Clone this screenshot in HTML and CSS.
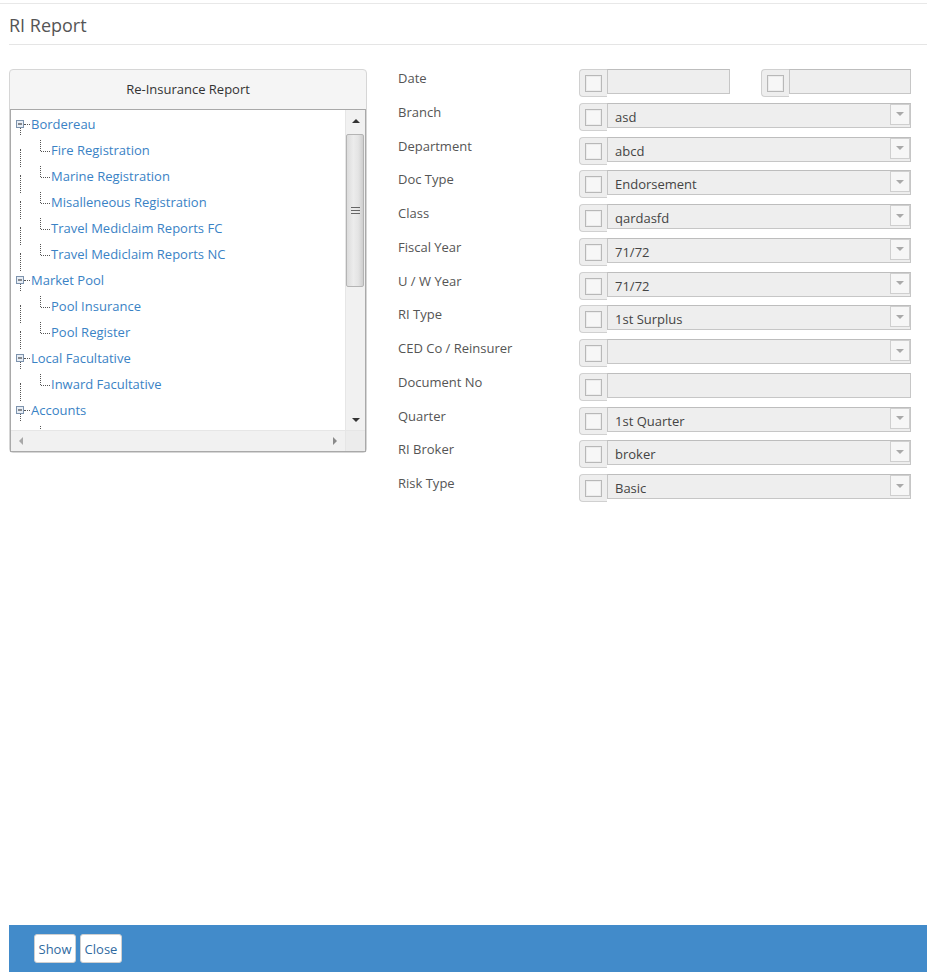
FILE: index.html
```html
<!DOCTYPE html>
<html>
<head>
<meta charset="utf-8">
<title>RI Report</title>
<link rel="stylesheet" href="styles.css">
</head>
<body>
<div class="app">
  <div class="topbar"></div>
  <div class="page-header">RI Report</div>
  <div class="main">
    <div class="panel">
      <div class="panel-title">Re-Insurance Report</div>
      <div class="tree-box">
        <div class="tree-content">
          <div class="row root"><svg class="tog" width="8" height="8" viewBox="0 0 8 8"><rect x="0.5" y="0.5" width="7" height="7" fill="#e8eef6" stroke="#7d93ad"/><line x1="2" y1="4" x2="6" y2="4" stroke="#222"/></svg><span class="conn"></span><a>Bordereau</a></div>
          <div class="row child"><i class="outer"></i><a>Fire Registration</a></div>
          <div class="row child"><i class="outer"></i><a>Marine Registration</a></div>
          <div class="row child"><i class="outer"></i><a>Misalleneous Registration</a></div>
          <div class="row child"><i class="outer"></i><a>Travel Mediclaim Reports FC</a></div>
          <div class="row child"><i class="outer"></i><a>Travel Mediclaim Reports NC</a></div>
          <div class="row root"><svg class="tog" width="8" height="8" viewBox="0 0 8 8"><rect x="0.5" y="0.5" width="7" height="7" fill="#e8eef6" stroke="#7d93ad"/><line x1="2" y1="4" x2="6" y2="4" stroke="#222"/></svg><span class="conn"></span><a>Market Pool</a></div>
          <div class="row child"><i class="outer"></i><a>Pool Insurance</a></div>
          <div class="row child"><i class="outer"></i><a>Pool Register</a></div>
          <div class="row root"><svg class="tog" width="8" height="8" viewBox="0 0 8 8"><rect x="0.5" y="0.5" width="7" height="7" fill="#e8eef6" stroke="#7d93ad"/><line x1="2" y1="4" x2="6" y2="4" stroke="#222"/></svg><span class="conn"></span><a>Local Facultative</a></div>
          <div class="row child"><i class="outer"></i><a>Inward Facultative</a></div>
          <div class="row root"><svg class="tog" width="8" height="8" viewBox="0 0 8 8"><rect x="0.5" y="0.5" width="7" height="7" fill="#e8eef6" stroke="#7d93ad"/><line x1="2" y1="4" x2="6" y2="4" stroke="#222"/></svg><span class="conn"></span><a>Accounts</a></div>
          <div class="row child"><i class="outer"></i><a></a></div>
        </div>
        <div class="vscroll">
          <div class="sbtn"><span class="tri up"></span></div>
          <div class="thumb"><span class="grip"></span></div>
          <div class="sfill"></div>
          <div class="sbtn"><span class="tri down"></span></div>
        </div>
        <div class="hscroll">
          <div class="hbtn"><span class="tri left"></span></div>
          <div class="sfill"></div>
          <div class="hbtn"><span class="tri right"></span></div>
        </div>
        <div class="corner"></div>
      </div>
    </div>

    <div class="form">
      <div class="frow">
        <label>Date</label>
        <div class="pair">
          <div class="group"><div class="addon"><span class="chk"></span></div><div class="field"></div></div>
          <div class="group"><div class="addon"><span class="chk"></span></div><div class="field"></div></div>
        </div>
      </div>
      <div class="frow">
        <label>Branch</label>
        <div class="group"><div class="addon"><span class="chk"></span></div><div class="field"><span class="val">asd</span><span class="dd"></span></div></div>
      </div>
      <div class="frow">
        <label>Department</label>
        <div class="group"><div class="addon"><span class="chk"></span></div><div class="field"><span class="val">abcd</span><span class="dd"></span></div></div>
      </div>
      <div class="frow">
        <label>Doc Type</label>
        <div class="group"><div class="addon"><span class="chk"></span></div><div class="field"><span class="val">Endorsement</span><span class="dd"></span></div></div>
      </div>
      <div class="frow">
        <label>Class</label>
        <div class="group"><div class="addon"><span class="chk"></span></div><div class="field"><span class="val">qardasfd</span><span class="dd"></span></div></div>
      </div>
      <div class="frow">
        <label>Fiscal Year</label>
        <div class="group"><div class="addon"><span class="chk"></span></div><div class="field"><span class="val">71/72</span><span class="dd"></span></div></div>
      </div>
      <div class="frow">
        <label>U / W Year</label>
        <div class="group"><div class="addon"><span class="chk"></span></div><div class="field"><span class="val">71/72</span><span class="dd"></span></div></div>
      </div>
      <div class="frow">
        <label>RI Type</label>
        <div class="group"><div class="addon"><span class="chk"></span></div><div class="field"><span class="val">1st Surplus</span><span class="dd"></span></div></div>
      </div>
      <div class="frow">
        <label>CED Co / Reinsurer</label>
        <div class="group"><div class="addon"><span class="chk"></span></div><div class="field"><span class="val"></span><span class="dd"></span></div></div>
      </div>
      <div class="frow">
        <label>Document No</label>
        <div class="group"><div class="addon"><span class="chk"></span></div><div class="field"></div></div>
      </div>
      <div class="frow">
        <label>Quarter</label>
        <div class="group"><div class="addon"><span class="chk"></span></div><div class="field"><span class="val">1st Quarter</span><span class="dd"></span></div></div>
      </div>
      <div class="frow">
        <label>RI Broker</label>
        <div class="group"><div class="addon"><span class="chk"></span></div><div class="field"><span class="val">broker</span><span class="dd"></span></div></div>
      </div>
      <div class="frow">
        <label>Risk Type</label>
        <div class="group"><div class="addon"><span class="chk"></span></div><div class="field"><span class="val">Basic</span><span class="dd"></span></div></div>
      </div>
    </div>
  </div>

  <div class="footer">
    <button class="btn">Show</button>
    <button class="btn">Close</button>
  </div>
</div>
</body>
</html>
```

FILE: styles.css
```css
* { box-sizing: border-box; }
html, body { margin: 0; height: 100%; }
body {
  font-family: "Open Sans", "DejaVu Sans", sans-serif;
  font-size: 13px;
  color: #555;
  background: #fff;
}
.app {
  min-height: 100vh;
  display: flex;
  flex-direction: column;
}
.topbar {
  height: 4px;
  border-bottom: 1px solid #e8e8e8;
}
.page-header {
  margin-left: 9px;
  height: 41px;
  padding-top: 1px;
  line-height: 40px;
  font-size: 18px;
  color: #555;
  border-bottom: 1px solid #e5e5e5;
}
.main {
  display: flex;
  align-items: flex-start;
  gap: 31px;
  padding: 24px 16px 0 9px;
}

/* left panel */
.panel {
  width: 358px;
  flex: none;
  border: 1px solid #d6d6d6;
  border-radius: 4px;
  background: #f5f5f5;
}
.panel-title {
  height: 39px;
  line-height: 39px;
  text-align: center;
  color: #333;
}
.tree-box {
  height: 343px;
  border: 1px solid #a9a9a9;
  background: #fff;
  display: grid;
  grid-template-columns: 1fr 20px;
  grid-template-rows: 1fr 21px;
}
.tree-content {
  overflow: hidden;
  padding-top: 1px;
}
.row {
  height: 26px;
  line-height: 26px;
  position: relative;
  white-space: nowrap;
}
.row a { color: #3a82c5; }
.row.root { padding-left: 5px; display: flex; align-items: center; }
.tog { display: block; flex: none; margin-top: -1px; }
.conn {
  width: 6px;
  margin: 0 1px 0 0;
  border-top: 1px dotted #555;
  height: 0;
}
.row.root::after {
  content: "";
  position: absolute;
  left: 9px;
  top: 17px;
  height: 7px;
  border-left: 1px dotted #555;
}
.row.child { padding-left: 40px; }
.row.child::before {
  content: "";
  position: absolute;
  left: 29px;
  top: 3px;
  height: 11px;
  border-left: 1px dotted #555;
}
.row.child::after {
  content: "";
  position: absolute;
  left: 30px;
  top: 14px;
  width: 9px;
  border-top: 1px dotted #555;
}
.outer {
  position: absolute;
  left: 9px;
  top: 12px;
  height: 18px;
  border-left: 1px dotted #555;
}

/* scrollbars */
.vscroll {
  background: #f1f1f1;
  border-left: 1px solid #e6e6e6;
  display: flex;
  flex-direction: column;
}
.sbtn {
  height: 21px;
  display: flex;
  align-items: center;
  justify-content: center;
  flex: none;
}
.sfill { flex: 1; }
.thumb {
  margin: 3px 1px 0 0;
  height: 153px;
  border: 1px solid #b4b4b4;
  border-radius: 2px;
  background: linear-gradient(to right, #dcdcdc, #ececec 40%, #e4e4e4 70%, #cfcfcf);
  display: flex;
  align-items: center;
  justify-content: center;
  flex: none;
}
.grip {
  width: 9px;
  height: 7px;
  border-top: 1px solid #666;
  border-bottom: 1px solid #666;
  background: linear-gradient(#666, #666) center / 100% 1px no-repeat;
}
.tri { width: 0; height: 0; border: 4px solid transparent; }
.tri.up { border-bottom-color: #333; border-top-width: 0; }
.tri.down { border-top-color: #333; border-bottom-width: 0; }
.tri.left { border-right-color: #a8a8a8; border-left-width: 0; }
.tri.right { border-left-color: #8a8a8a; border-right-width: 0; }
.hscroll {
  background: #f1f1f1;
  border-top: 1px solid #e6e6e6;
  display: flex;
}
.hbtn {
  width: 20px;
  display: flex;
  align-items: center;
  justify-content: center;
}
.corner { background: #ececec; border-top: 1px solid #e6e6e6; border-left: 1px solid #e6e6e6; }

/* form */
.form { flex: 1; }
.frow {
  height: 33.75px;
  display: grid;
  grid-template-columns: 181px 1fr;
}
.frow label {
  line-height: 18px;
  color: #555;
}
.pair {
  display: flex;
  gap: 31px;
}
.pair .group { flex: 1; }
.group {
  display: flex;
  align-items: flex-start;
}
.addon {
  width: 28px;
  height: 28px;
  flex: none;
  background: #eee;
  border: 1px solid #d0d0d0;
  border-right: none;
  border-radius: 4px 0 0 4px;
  padding: 5px 0 0 5px;
}
.chk {
  display: block;
  width: 17px;
  height: 17px;
  border: 1px solid #b8b8b8;
  background: #f7f7f7;
  box-shadow: inset 0 0 0 1px #ececec;
}
.field {
  flex: 1;
  min-width: 0;
  height: 25px;
  border: 1px solid #c6c6c6;
  border-top-color: #bdbdbd;
  background: #eee;
  display: flex;
  align-items: flex-start;
  padding-left: 7px;
}
.val {
  line-height: 23px;
  padding-top: 2px;
  color: #444;
}
.dd {
  margin-left: auto;
  width: 20px;
  height: 21px;
  margin-top: 0;
  border: 1px solid #cfcfcf;
  background: #f6f6f6;
  display: flex;
  align-items: center;
  justify-content: center;
}
.dd::before {
  content: "";
  border: 4px solid transparent;
  border-top: 4px solid #a9a9a9;
  border-bottom-width: 0;
}

/* footer */
.footer {
  margin-top: auto;
  margin-left: 9px;
  height: 47px;
  background: #428bca;
  padding: 9px 0 0 25px;
  display: flex;
  align-items: flex-start;
  gap: 4px;
}
.btn {
  height: 29px;
  width: 42px;
  padding: 0;
  background: #fff;
  border: 1px solid #cfcfcf;
  border-radius: 3px;
  font-family: "Open Sans", "DejaVu Sans", sans-serif;
  font-size: 13px;
  color: #2f6a9f;
}
```
